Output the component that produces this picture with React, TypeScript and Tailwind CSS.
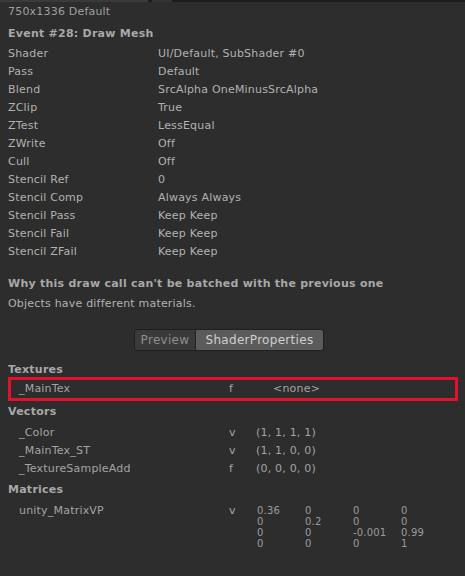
const props: [string, string][] = [
  ['Shader', 'UI/Default, SubShader #0'],
  ['Pass', 'Default'],
  ['Blend', 'SrcAlpha OneMinusSrcAlpha'],
  ['ZClip', 'True'],
  ['ZTest', 'LessEqual'],
  ['ZWrite', 'Off'],
  ['Cull', 'Off'],
  ['Stencil Ref', '0'],
  ['Stencil Comp', 'Always Always'],
  ['Stencil Pass', 'Keep Keep'],
  ['Stencil Fail', 'Keep Keep'],
  ['Stencil ZFail', 'Keep Keep'],
];

const vectors: [string, string, string][] = [
  ['_Color', 'v', '(1, 1, 1, 1)'],
  ['_MainTex_ST', 'v', '(1, 1, 0, 0)'],
  ['_TextureSampleAdd', 'f', '(0, 0, 0, 0)'],
];

const matrix = [
  ['0.36', '0', '0', '0'],
  ['0', '0.2', '0', '0'],
  ['0', '0', '-0.001', '0.99'],
  ['0', '0', '0', '1'],
];

function Heading({ children }: { children: React.ReactNode }) {
  return (
    <div className="h-[18px] leading-[18px] font-bold tracking-[0.25px] text-[#a8a8a8]">{children}</div>
  );
}

export default function App() {
  return (
    <div
      className="w-[465px] h-[576px] bg-[#2d2d2d] text-[11px] tracking-[0.2px] text-[#b2b2b2] overflow-hidden"
      style={{ fontFamily: '"DejaVu Sans", Verdana, sans-serif' }}
    >
      {/* top strip */}
      <div className="flex h-[2px] bg-[#1c1c1c]">
        <div className="w-[148px] bg-[#3a3a3a]" />
        <div className="w-[4px]" />
        <div className="w-[20px] bg-[#333333]" />
      </div>

      <div className="px-2 pt-[1px]">
        <div className="h-[18px] leading-[18px] text-[#a0a0a0]">750x1336 Default</div>

        <div className="mt-[4px]">
          <Heading>Event #28: Draw Mesh</Heading>
        </div>

        <div className="mt-[2px]">
          {props.map(([k, v]) => (
            <div key={k} className="flex h-[18px] leading-[18px]">
              <div className="w-[150px] shrink-0">{k}</div>
              <div>{v}</div>
            </div>
          ))}
        </div>

        <div className="mt-[14px]">
          <Heading>Why this draw call can't be batched with the previous one</Heading>
          <div className="mt-[2px] h-[18px] leading-[18px]">Objects have different materials.</div>
        </div>

        <div className="mt-[16px] flex justify-center pr-[7px]">
          <div className="flex h-[22px] rounded-[3px] overflow-hidden border border-[#1f1f1f] text-[12px] leading-[20px] tracking-[0.3px]">
            <div className="w-[61px] bg-[#3a3a3a] text-[#8e8e8e] text-center border-r border-[#232323]">
              Preview
            </div>
            <div className="w-[127px] bg-[#5b5b5b] text-[#cfcfcf] text-center">ShaderProperties</div>
          </div>
        </div>

        <div className="mt-[10px]">
          <Heading>Textures</Heading>
        </div>
        <div className="-mt-[2px] flex h-[24px] w-[450px] items-center border-[3px] border-[#e3112c] text-[#a4a4a4]">
          <div className="w-[218px] shrink-0 pl-[8px]">_MainTex</div>
          <div className="w-[44px] shrink-0">f</div>
          <div>&lt;none&gt;</div>
        </div>

        <div className="mt-[2px]">
          <Heading>Vectors</Heading>
        </div>
        <div className="mt-[3px] text-[#a4a4a4]">
          {vectors.map(([n, t, v]) => (
            <div key={n} className="flex h-[18px] leading-[18px]">
              <div className="w-[221px] shrink-0 pl-[11px]">{n}</div>
              <div className="w-[27px] shrink-0">{t}</div>
              <div>{v}</div>
            </div>
          ))}
        </div>

        <div className="mt-[3px]">
          <Heading>Matrices</Heading>
        </div>
        <div className="mt-[3px] flex text-[#a4a4a4]">
          <div className="w-[221px] shrink-0 pl-[11px] h-[18px] leading-[18px]">unity_MatrixVP</div>
          <div className="w-[28px] shrink-0 h-[18px] leading-[18px]">v</div>
          <div className="pt-[3px] text-[10px] text-[#9c9c9c]">
            {matrix.map((row, i) => (
              <div key={i} className="flex h-[11px] leading-[11px]">
                {row.map((c, j) => (
                  <div key={j} className="w-[48px]">
                    {c}
                  </div>
                ))}
              </div>
            ))}
          </div>
        </div>
      </div>
    </div>
  );
}
